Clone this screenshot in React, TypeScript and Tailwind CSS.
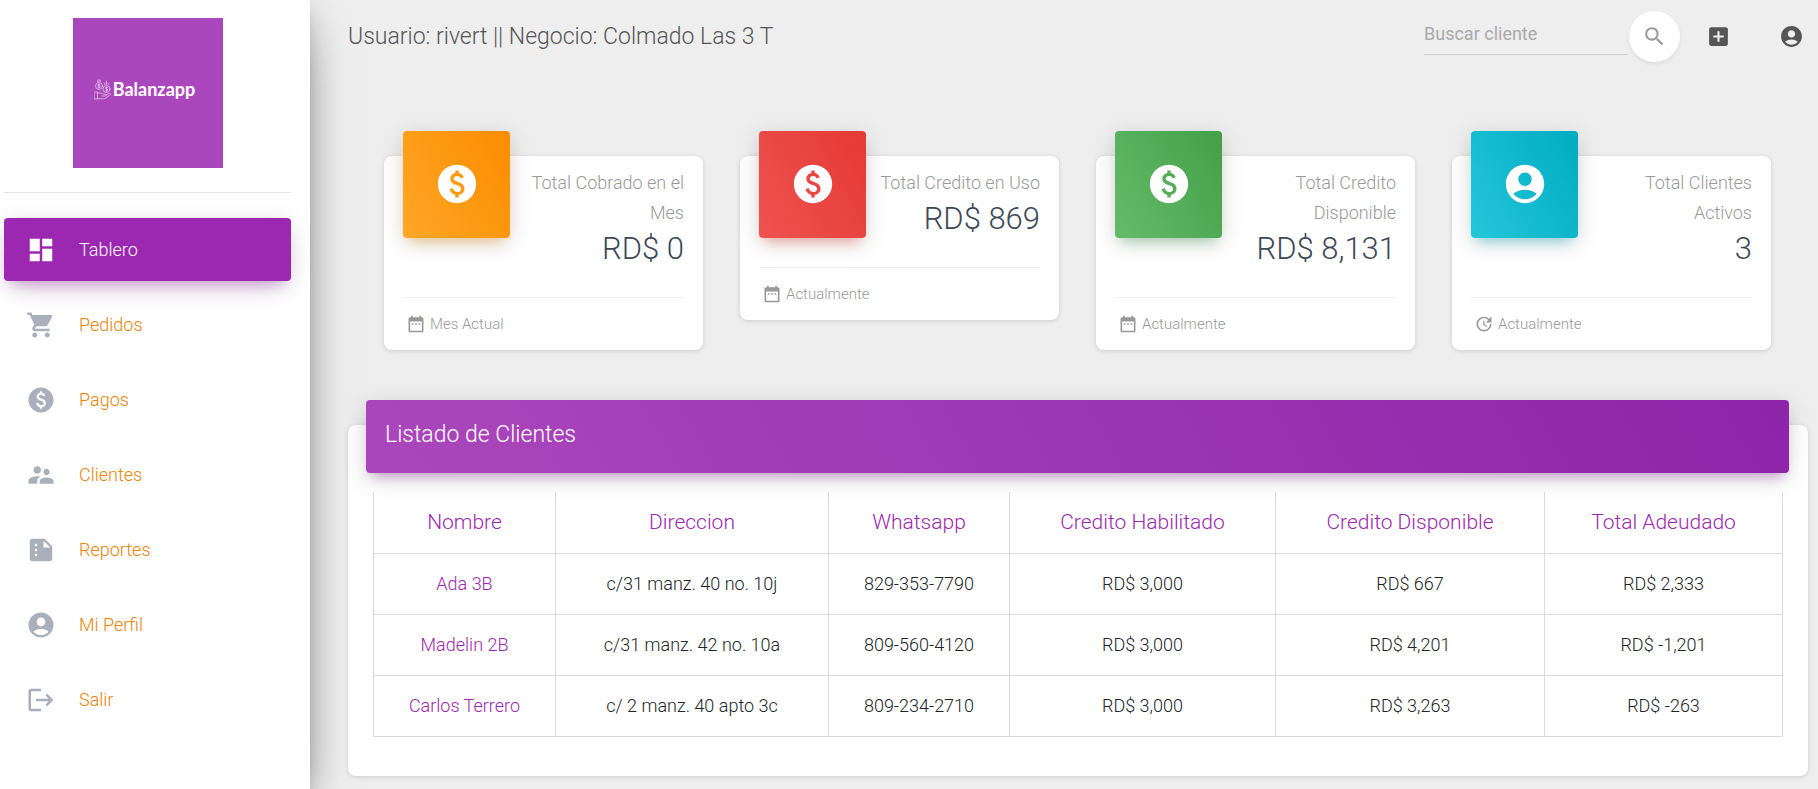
import type { IconType } from "react-icons";
import {
  MdAccountCircle,
  MdAddBox,
  MdDashboard,
  MdDateRange,
  MdLogout,
  MdPaid,
  MdSearch,
  MdShoppingCart,
  MdSummarize,
  MdSupervisorAccount,
  MdUpdate,
} from "react-icons/md";
import { clsx } from "clsx";

interface NavItem {
  label: string;
  icon: IconType;
  active?: boolean;
}

interface Stat {
  label: string;
  value: string;
  icon: IconType;
  tile: string;
  footer: string;
  footerIcon: IconType;
}

interface Client {
  name: string;
  address: string;
  whatsapp: string;
  enabled: string;
  available: string;
  owed: string;
}

const navItems: NavItem[] = [
  { label: "Tablero", icon: MdDashboard, active: true },
  { label: "Pedidos", icon: MdShoppingCart },
  { label: "Pagos", icon: MdPaid },
  { label: "Clientes", icon: MdSupervisorAccount },
  { label: "Reportes", icon: MdSummarize },
  { label: "Mi Perfil", icon: MdAccountCircle },
  { label: "Salir", icon: MdLogout },
];

const stats: Stat[] = [
  {
    label: "Total Cobrado en el Mes",
    value: "RD$ 0",
    icon: MdPaid,
    tile: "bg-[linear-gradient(60deg,#ffa726,#fb8c00)] shadow-[0_5px_25px_rgba(0,0,0,0.14),0_9px_12px_-6px_rgba(255,152,0,0.4)]",
    footer: "Mes Actual",
    footerIcon: MdDateRange,
  },
  {
    label: "Total Credito en Uso",
    value: "RD$ 869",
    icon: MdPaid,
    tile: "bg-[linear-gradient(60deg,#ef5350,#e53935)] shadow-[0_5px_25px_rgba(0,0,0,0.14),0_9px_12px_-6px_rgba(244,67,54,0.4)]",
    footer: "Actualmente",
    footerIcon: MdDateRange,
  },
  {
    label: "Total Credito Disponible",
    value: "RD$ 8,131",
    icon: MdPaid,
    tile: "bg-[linear-gradient(60deg,#66bb6a,#43a047)] shadow-[0_5px_25px_rgba(0,0,0,0.14),0_9px_12px_-6px_rgba(76,175,80,0.4)]",
    footer: "Actualmente",
    footerIcon: MdDateRange,
  },
  {
    label: "Total Clientes Activos",
    value: "3",
    icon: MdAccountCircle,
    tile: "bg-[linear-gradient(60deg,#26c6da,#00acc1)] shadow-[0_5px_25px_rgba(0,0,0,0.14),0_9px_12px_-6px_rgba(0,188,212,0.4)]",
    footer: "Actualmente",
    footerIcon: MdUpdate,
  },
];

const columns = [
  { label: "Nombre", width: "w-[182px]" },
  { label: "Direccion", width: "w-[273px]" },
  { label: "Whatsapp", width: "w-[181px]" },
  { label: "Credito Habilitado", width: "w-[266px]" },
  { label: "Credito Disponible", width: "w-[269px]" },
  { label: "Total Adeudado", width: "w-[238px]" },
];

const clients: Client[] = [
  {
    name: "Ada 3B",
    address: "c/31 manz. 40 no. 10j",
    whatsapp: "829-353-7790",
    enabled: "RD$ 3,000",
    available: "RD$ 667",
    owed: "RD$ 2,333",
  },
  {
    name: "Madelin 2B",
    address: "c/31 manz. 42 no. 10a",
    whatsapp: "809-560-4120",
    enabled: "RD$ 3,000",
    available: "RD$ 4,201",
    owed: "RD$ -1,201",
  },
  {
    name: "Carlos Terrero",
    address: "c/ 2 manz. 40 apto 3c",
    whatsapp: "809-234-2710",
    enabled: "RD$ 3,000",
    available: "RD$ 3,263",
    owed: "RD$ -263",
  },
];

// Open hand holding two coins
function HandCoins() {
  return (
    <svg
      viewBox="0 0 34 42"
      className="h-[21px] w-[17px]"
      fill="none"
      stroke="white"
      strokeWidth="1.2"
      strokeOpacity="0.85"
      strokeLinecap="round"
      strokeLinejoin="round"
      aria-hidden="true"
    >
      <circle cx="10" cy="14" r="7" />
      <path d="M12.5 11.5c-1-1.5-5-1.3-5 .8 0 2.4 5.2 1 5.2 3.6 0 2-4.2 2.2-5.4.4M10 9.5v9" />
      <path d="M10 1v4M7.5 2.5v3M12.5 2.5v3" />
      <circle cx="25" cy="20" r="7" />
      <path d="M27.5 17.5c-1-1.500-5-1.300-5 .8 0 2.400 5.200 1 5.200 3.600 0 2-4.200 2.200-5.400.4M25 15.500v9" />
      <path d="M25 4v7M21.5 8v3M28.5 8v3" />
      <path d="M1 26h6v14H1zM7 28h6c3 0 4 2.5 7 2.5h3c2.5 0 2.5 3.5 0 3.5h-7" />
      <path d="M24 32l6-3c2.5-1 4 1.5 2 3l-8 6c-1.5 1-3 1.5-5 1.5H7" />
    </svg>
  );
}

function Sidebar() {
  return (
    <aside className="relative z-10 w-[310px] shrink-0 bg-white pt-[18px] pr-[19px] pl-1 shadow-[0_20px_48px_-15px_rgba(0,0,0,0.56),0_5px_31px_rgba(0,0,0,0.12),0_10px_12px_-6px_rgba(0,0,0,0.2)]">
      <div className="border-b border-[#e3e3e3] pb-6">
        <a
          href="#"
          className="mx-auto flex h-[150px] w-[150px] items-center justify-center bg-[#ab47bc] pr-1.5 pb-2"
        >
          <HandCoins />
          <span className="ml-0.5 font-['Lato','Noto_Sans',sans-serif] text-[18px] leading-5 font-bold text-white">
            Balanzapp
          </span>
        </a>
      </div>

      <nav className="mt-[25px] flex flex-col gap-3">
        {navItems.map(({ label, icon: Icon, active }) => (
          <a
            key={label}
            href="#"
            className={clsx(
              "flex h-[63px] items-center gap-[23px] rounded-[4px] pl-[22px] text-[18px]",
              active
                ? "bg-[#9c27b0] text-white shadow-[0_15px_25px_-12px_rgba(156,39,176,0.28),0_5px_25px_rgba(0,0,0,0.12),0_9px_10px_-6px_rgba(156,39,176,0.2)]"
                : "text-[#ee8207]"
            )}
          >
            <Icon
              className={clsx("h-[30px] w-[30px]", active ? "text-white" : "text-[#a9afbb]")}
            />
            {label}
          </a>
        ))}
      </nav>
    </aside>
  );
}

function Header() {
  return (
    <header className="flex h-[72px] items-center justify-between pr-1 text-[#555]">
      <h1 className="pt-0.5 text-[23px] leading-8">
        Usuario: rivert || Negocio: Colmado Las 3 T
      </h1>
      <div className="flex items-center">
        <form className="flex items-center" onSubmit={(e) => e.preventDefault()}>
          <input
            type="text"
            aria-label="Buscar cliente"
            placeholder="Buscar cliente"
            className="h-[38px] w-[204px] border-b border-[#d2d2d2] bg-transparent pb-1 text-[18px] font-normal outline-none placeholder:text-[#aaa]"
          />
          <button
            type="submit"
            aria-label="Buscar"
            className="ml-px flex h-[51px] w-[51px] items-center justify-center rounded-full bg-white text-[#999] shadow-[0_2px_4px_rgba(0,0,0,0.08)]"
          >
            <MdSearch className="h-[25px] w-[25px]" />
          </button>
        </form>
        <button type="button" aria-label="Agregar" className="ml-[26px]">
          <MdAddBox className="h-[25px] w-[25px]" />
        </button>
        <button type="button" aria-label="Cuenta" className="ml-12">
          <MdAccountCircle className="h-[25px] w-[25px]" />
        </button>
      </div>
    </header>
  );
}

function StatCard({ label, value, icon: Icon, tile, footer, footerIcon: FooterIcon }: Stat) {
  return (
    <article className="rounded-[8px] bg-white px-[19px] shadow-[0_1px_5px_rgba(0,0,0,0.14)]">
      <div className="flex items-start gap-2.5">
        <div
          className={clsx(
            "-mt-[25px] flex h-[107px] w-[107px] shrink-0 items-center justify-center rounded-[4px] pb-0.5 text-white",
            tile
          )}
        >
          <Icon className="h-[46px] w-[46px]" />
        </div>
        <div className="flex-1 pt-3 text-right">
          <p className="text-[18px] leading-[30px] text-[#999]">{label}</p>
          <h3 className="text-[31px] leading-[42px] text-[#3c4858]">{value}</h3>
        </div>
      </div>
      <div className="mt-[27px] flex h-[53px] items-center gap-1 border-t border-[#eee] pl-[3px] text-[15px] text-[#999]">
        <FooterIcon className="h-5 w-5" />
        {footer}
      </div>
    </article>
  );
}

function ClientTable() {
  return (
    <section className="mt-[75px] mb-[14px] rounded-[8px] bg-white pb-[39px] shadow-[0_1px_5px_rgba(0,0,0,0.14)]">
      <div className="relative -top-[25px] mr-[19px] -mb-[25px] ml-[18px] rounded-[4px] bg-[linear-gradient(60deg,#ab47bc,#8e24aa)] px-[19px] pt-[18px] pb-[21px] shadow-[0_5px_25px_rgba(0,0,0,0.14),0_9px_12px_-6px_rgba(156,39,176,0.4)]">
        <h2 className="text-[23px] leading-[34px] text-white">Listado de Clientes</h2>
      </div>
      <div className="mx-[25px] mt-[19px]">
        <table className="w-full border-collapse text-center text-[#212529]">
          <thead>
            <tr className="h-[61px]">
              {columns.map(({ label, width }) => (
                <th
                  key={label}
                  scope="col"
                  className={clsx(
                    "border-x border-b border-[#dbdbdb] text-[21px] font-light text-[#9c27b0]",
                    width
                  )}
                >
                  {label}
                </th>
              ))}
            </tr>
          </thead>
          <tbody className="text-[18px]">
            {clients.map((client) => (
              <tr key={client.name} className="h-[61px]">
                <td className="border border-[#dbdbdb]">
                  <a href="#" className="text-[#9c27b0]">
                    {client.name}
                  </a>
                </td>
                <td className="border border-[#dbdbdb]">{client.address}</td>
                <td className="border border-[#dbdbdb]">{client.whatsapp}</td>
                <td className="border border-[#dbdbdb]">{client.enabled}</td>
                <td className="border border-[#dbdbdb]">{client.available}</td>
                <td className="border border-[#dbdbdb]">{client.owed}</td>
              </tr>
            ))}
          </tbody>
        </table>
      </div>
    </section>
  );
}

export default function App() {
  return (
    <div className="flex min-h-screen bg-[#eee] font-['Roboto','Liberation_Sans',sans-serif] font-light">
      <Sidebar />
      <main className="min-w-0 flex-1 pr-[10px] pl-[38px]">
        <Header />
        <div className="mt-[84px] grid grid-cols-4 items-start gap-[37px] pr-[37px] pl-9">
          {stats.map((stat) => (
            <StatCard key={stat.label} {...stat} />
          ))}
        </div>
        <ClientTable />
      </main>
    </div>
  );
}
